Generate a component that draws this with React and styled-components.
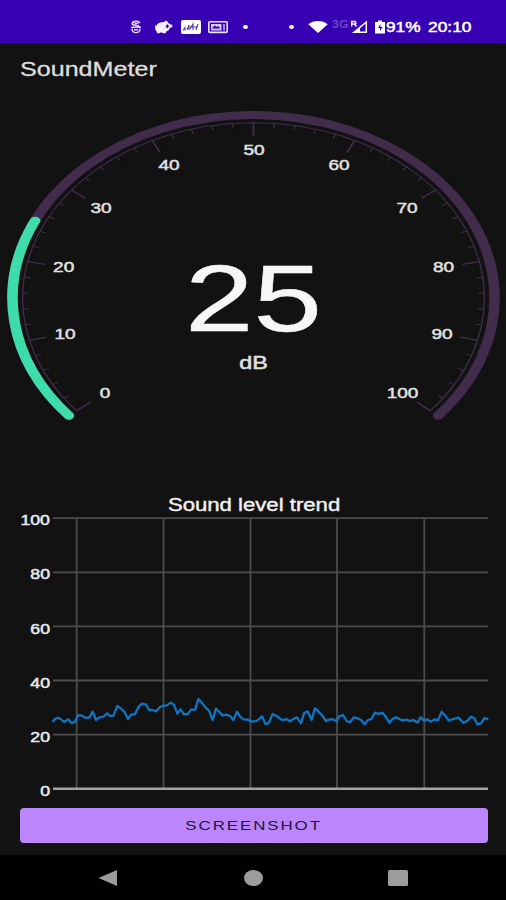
import React from 'react'
import styled, { createGlobalStyle } from 'styled-components'

const level = 25

const gaugeLabels = [
  { value: 0, x: 105, y: 355 },
  { value: 10, x: 65, y: 296 },
  { value: 20, x: 63.7, y: 229 },
  { value: 30, x: 101, y: 169.5 },
  { value: 40, x: 169, y: 127 },
  { value: 50, x: 254, y: 112 },
  { value: 60, x: 339, y: 127 },
  { value: 70, x: 407, y: 169.5 },
  { value: 80, x: 443.5, y: 229 },
  { value: 90, x: 442, y: 296 },
  { value: 100, x: 402.5, y: 355 },
]

const rows = [100, 80, 60, 40, 20, 0]
const columns = [76.7, 163.5, 250.5, 337, 424.3]

// x, y pairs in thirds of a pixel
const trend = `38,155 45,147 53,143 62,147 72,156 84,148 95,160 105,155 114,136 125,136 135,143
  148,143 158,125 168,150 178,142 190,140 202,130 210,138 220,137 232,108 242,115 253,125
  264,147 274,133 285,133 296,110 306,101 318,104 327,120 338,120 348,124 359,112 369,107
  380,106 392,98 402,104 412,131 422,118 432,133 443,132 454,118 465,120 475,87 485,97
  497,113 507,122 518,150 528,116 538,126 548,136 559,134 570,138 580,150 591,125 602,142
  613,149 625,149 635,155 650,153 666,139 677,163 687,158 698,132 710,138 723,148 732,150
  740,147 750,154 760,147 771,142 783,160 792,130 803,124 815,150 825,115 836,125 847,137
  858,153 870,148 880,148 889,154 897,140 909,135 920,153 930,157 941,142 952,145 963,150
  974,163 984,150 994,147 1005,128 1016,132 1027,128 1037,140 1048,158 1057,148 1067,142
  1080,148 1090,151 1100,149 1110,153 1120,150 1132,158 1142,142 1152,152 1162,148
  1173,155 1184,148 1194,151 1205,125 1216,137 1226,152 1240,147 1255,143 1271,159
  1282,152 1293,140 1303,145 1312,163 1323,160 1334,144 1345,148`

// 0 dB sits at 140deg, 100 dB at 400deg
const polar = (value, r) => {
  const a = ((140 + value * 2.6) * Math.PI) / 180
  return [r * Math.cos(a), r * Math.sin(a)]
}

const arc = (to, r) => {
  const [x1, y1] = polar(0, r)
  const [x2, y2] = polar(to, r)
  return `M${x1} ${y1}A${r} ${r} 0 ${to * 2.6 > 180 ? 1 : 0} 1 ${x2} ${y2}`
}

const Gauge = () => {
  const ticks = []
  for (let v = 0; v <= 100; v += 2) {
    const major = v % 10 === 0
    const [x1, y1] = polar(v, 175.3)
    const [x2, y2] = polar(v, major ? 162 : 170.5)
    ticks.push(<Tick key={v} $major={major} x1={x1} y1={y1} x2={x2} y2={y2} />)
  }

  return (
    <GaugeSvg viewBox="0 0 506 390">
      <g transform="translate(253.5 203) scale(1.317 1)">
        <Track d={arc(100, 183)} />
        <InnerTrack d={arc(100, 175.3)} />
        {ticks}
        <Progress d={arc(level, 183)} />
      </g>
      {gaugeLabels.map((l) => (
        <g key={l.value} transform={`translate(${l.x} ${l.y - 52}) scale(1.27 1)`}>
          <GaugeLabel>{l.value}</GaugeLabel>
        </g>
      ))}
      <g transform="translate(253.5 235.5) scale(1.31 1)">
        <Value>{level}</Value>
      </g>
      <g transform="translate(253.5 273.8) scale(1.3 1)">
        <Unit>dB</Unit>
      </g>
    </GaugeSvg>
  )
}

const Chart = () => (
  <ChartSvg viewBox="0 0 506 283">
    {columns.map((x) => (
      <GridLine key={x} x1={x} x2={x} y1="3" y2="273" />
    ))}
    {rows.map((r, i) => (
      <React.Fragment key={r}>
        <GridLine $base={r === 0} x1="53" x2="488" y1={3.2 + i * 54.1} y2={3.2 + i * 54.1} />
        <g transform={`translate(50 ${10.3 + i * 54.1}) scale(1.25 1)`}>
          <AxisLabel>{r}</AxisLabel>
        </g>
      </React.Fragment>
    ))}
    <g transform="translate(40 155) scale(0.33333)">
      <Trend points={trend} />
    </g>
  </ChartSvg>
)

const StatusIcons = () => (
  <>
    <Icon $left={130} $width={12} viewBox="0 0 12 14">
      <path d="M10 3C9 .8 2.500.8 2.200 3.500 2 6 10 5 10 7.200M1.200 7.200h9.600" fill="none" stroke="#e2d8f6" strokeWidth="1.600" />
      <path d="M2 8.500c0 5.500 8 5.500 8 0M4 9.800h4M4.500 3.500h4" fill="none" stroke="#e2d8f6" strokeWidth="1.400" />
    </Icon>
    <Icon $left={12} $width={19} viewBox="0 0 19 14">
      <path d="M.8 5.200l1.500.6C3.500 3 6 1.800 9 2.200L12.800.6l1 1.800L16 4.200l2.500.8-.3 2.200-2.200.6-1.500 2.700-2 .8-.8 1.900H9l-1-.7H6.500l-.8.7H3.300L2.300 11C.8 9.300.8 7.500 1.500 6.500z" fill="#f4efff" />
      <path d="M13.200 4l1.800 2-1.600 2.600-1.800-2.100z" fill="#3700b3" />
    </Icon>
    <Icon $left={8} $width={20} viewBox="0 0 20 14">
      <rect width="20" height="14" rx="2" fill="#fff" />
      <path d="M2 10.500l2-3v3m2-.5l2-5v5m1-1l3-5v6m1-3h3m-1 3l2-6m-8 3h8" fill="none" stroke="#5a3aae" strokeWidth="1.100" />
    </Icon>
    <Icon $left={7} $width={20} viewBox="0 0 20 14">
      <rect x=".8" y="1.800" width="18.400" height="10.600" rx="1" fill="none" stroke="#e9e1fb" strokeWidth="1.600" />
      <path d="M3 4h10.500v6.500H3z" fill="#d8cbf3" />
      <path d="M4 8.500l2.500-3 2 1.500 1.500-1 2.500 2.500z" fill="#3700b3" />
      <path d="M16 4v6.500" stroke="#d8cbf3" strokeWidth="1.400" />
    </Icon>
    <Dot $left={15} />
    <Dot $left={41} />
    <Icon $left={14} $width={20} viewBox="0 0 20 14">
      <path d="M.3 4.300C5-.2 15-.2 19.700 4.300L10 13z" fill="#fff" />
    </Icon>
    <Network>
      <Wide $scale={1.24}>3G</Wide>
    </Network>
    <Icon $left={0} $width={18} viewBox="0 0 18 14">
      <path d="M4 12.300L16.300 2v10.300z" fill="none" stroke="#fff" strokeWidth="1.500" />
      <path d="M4 12.300L10 7.300v5z" fill="#fff" />
      <path d="M1.700 6.500V1.500h3.500q1.500 1.300 0 2.500H2m2.500 0l2 2.500" fill="none" stroke="#fff" strokeWidth="1.400" />
    </Icon>
    <Icon $left={6} $width={12} viewBox="0 0 12 14">
      <path d="M1 2h3V.5h4V2h3v11.500H1z" fill="#fff" />
      <path d="M6.500 4L4 8h2v3l2.500-4h-2z" fill="#3700b3" />
    </Icon>
    <StatusText $width={42}>
      <Wide $scale={1.23}>91%</Wide>
    </StatusText>
    <StatusText $width={44}>
      <Wide $scale={1.24}>20:10</Wide>
    </StatusText>
  </>
)

const App = () => {
  return (
    <Screen>
      <GlobalStyle />
      <StatusBar>
        <StatusIcons />
      </StatusBar>
      <Toolbar>
        <Title>
          <Wide $scale={1.255}>SoundMeter</Wide>
        </Title>
      </Toolbar>
      <Gauge />
      <ChartTitle>
        <Wide $scale={1.23} $center>Sound level trend</Wide>
      </ChartTitle>
      <Chart />
      <Button>
        <Wide $scale={1.25} $center>SCREENSHOT</Wide>
      </Button>
      <NavBar>
        <NavIcon viewBox="0 0 20 16">
          <path d="M.5 8L19 0v16z" />
        </NavIcon>
        <NavIcon viewBox="0 0 20 16">
          <ellipse cx="10.500" cy="8" rx="9.500" ry="8" />
        </NavIcon>
        <NavIcon viewBox="0 0 20 16">
          <rect width="20" height="16" rx="1.500" />
        </NavIcon>
      </NavBar>
    </Screen>
  )
}

export default App

const GlobalStyle = createGlobalStyle`
    body {
        margin: 0;
        background: #121212;
    }
`

const Screen = styled.main`
    display: flex;
    flex-direction: column;
    width: 506px;
    height: 900px;
    overflow: hidden;
    background: #121212;
    color: #e6e6e6;
    font-family: "Liberation Sans", Arial, sans-serif;
`

const Wide = styled.span`
    display: inline-block;
    white-space: nowrap;
    transform: scaleX(${(p) => p.$scale});
    transform-origin: ${(p) => (p.$center ? 'center' : 'left')};
`

const StatusBar = styled.header`
    display: flex;
    align-items: center;
    flex: none;
    box-sizing: border-box;
    height: 43px;
    padding-top: 10px;
    background: #3700b3;
`

const Icon = styled.svg`
    flex: none;
    width: ${(p) => p.$width}px;
    height: 14px;
    margin-left: ${(p) => p.$left}px;
`

const Dot = styled.i`
    flex: none;
    width: 5px;
    height: 4px;
    margin-left: ${(p) => p.$left}px;
    border-radius: 50%;
    background: #fff;
`

const Network = styled.span`
    flex: none;
    width: 18px;
    margin: -5px 0 0 4px;
    font-size: 10px;
    font-weight: 700;
    color: #6a47c6;
`

const StatusText = styled.span`
    flex: none;
    width: ${(p) => p.$width}px;
    font-size: 14px;
    line-height: 16px;
    color: #fff;
    -webkit-text-stroke: 0.5px #fff;
`

const Toolbar = styled.div`
    flex: none;
    height: 52px;
    padding-left: 20px;
`

const Title = styled.h1`
    margin: 0;
    font-size: 20px;
    font-weight: 400;
    line-height: 52px;
    color: #dedede;
    -webkit-text-stroke: 0.3px #dedede;
`

const GaugeSvg = styled.svg`
    display: block;
    flex: none;
    width: 506px;
    height: 390px;
`

const Track = styled.path`
    fill: none;
    stroke: #412d4b;
    stroke-width: 8;
    stroke-linecap: round;
`

const Progress = styled(Track)`
    stroke: #3ddcaa;
`

const InnerTrack = styled(Track)`
    stroke-width: 1;
    stroke-linecap: butt;
`

const Tick = styled.line`
    stroke: #412f49;
    stroke-width: ${(p) => (p.$major ? 1.3 : 0.9)};
`

const GaugeLabel = styled.text`
    font-size: 15px;
    text-anchor: middle;
    fill: #e0e0e0;
    stroke: #e0e0e0;
    stroke-width: 0.5;
`

const Value = styled.text`
    font-size: 94px;
    text-anchor: middle;
    fill: #f7f7f7;
    stroke: #f7f7f7;
    stroke-width: 0.5;
`

const Unit = styled(GaugeLabel)`
    font-size: 18px;
`

const ChartTitle = styled.h2`
    flex: none;
    height: 30px;
    margin: 0;
    padding-left: 2px;
    font-size: 18px;
    font-weight: 400;
    line-height: 40px;
    text-align: center;
    color: #f0f0f0;
    -webkit-text-stroke: 0.4px #f0f0f0;
`

const ChartSvg = styled.svg`
    display: block;
    flex: none;
    width: 506px;
    height: 283px;
    overflow: visible;
`

const GridLine = styled.line`
    stroke: ${(p) => (p.$base ? '#a3a3a3' : '#4c4c4c')};
    stroke-width: ${(p) => (p.$base ? 2.4 : 1.8)};
`

const AxisLabel = styled.text`
    font-size: 14.2px;
    text-anchor: end;
    fill: #e8e8e8;
    stroke: #e8e8e8;
    stroke-width: 0.5;
`

const Trend = styled.polyline`
    fill: none;
    stroke: #0f76c6;
    stroke-width: 6.8;
    stroke-linejoin: round;
`

const Button = styled.button`
    flex: none;
    width: 468px;
    height: 35px;
    margin: 10px 0 0 20px;
    padding: 0;
    border: 0;
    border-radius: 4px;
    background: #bb86fc;
    color: #24133a;
    font-family: inherit;
    font-size: 13.5px;
    letter-spacing: 1.55px;
`

const NavBar = styled.nav`
    display: flex;
    flex: none;
    align-items: center;
    justify-content: space-between;
    box-sizing: border-box;
    height: 45px;
    margin-top: 12px;
    padding: 0 98px;
    background: #000;
`

const NavIcon = styled.svg`
    width: 20px;
    height: 16px;
    fill: #9c9c9c;
`
